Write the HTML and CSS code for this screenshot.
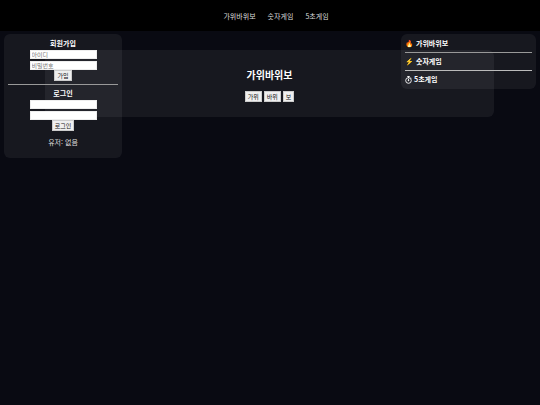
FILE: index.html
```html
<!DOCTYPE html>
<html lang="ko">
<head>
<meta charset="utf-8">
<title>가위바위보</title>
<link rel="stylesheet" href="styles.css">
</head>
<body>
<nav class="topbar">
  <a href="#rps">가위바위보</a>
  <a href="#number">숫자게임</a>
  <a href="#five">5초게임</a>
</nav>
<main class="stage">
  <section class="card game" id="rps">
    <h1>가위바위보</h1>
    <div class="choices">
      <button type="button">가위</button>
      <button type="button">바위</button>
      <button type="button">보</button>
    </div>
  </section>
  <aside class="card account">
    <form class="form">
      <h2>회원가입</h2>
      <input type="text" placeholder="아이디" aria-label="아이디">
      <input type="password" placeholder="비밀번호" aria-label="비밀번호">
      <button type="button">가입</button>
    </form>
    <hr>
    <form class="form">
      <h2>로그인</h2>
      <input type="text" aria-label="로그인 아이디">
      <input type="password" aria-label="로그인 비밀번호">
      <button type="button">로그인</button>
    </form>
    <p class="user">유저: 없음</p>
  </aside>
  <aside class="card ranking">
    <h2>🔥 가위바위보</h2>
    <hr>
    <h2>⚡ 숫자게임</h2>
    <hr class="bright">
    <h2 class="timed">
      <svg class="stopwatch" viewBox="0 0 14 16" fill="none" stroke="currentColor" aria-hidden="true">
        <circle cx="7" cy="9" r="5.6" stroke-width="1.8"/>
        <path d="M4.5 1h5M7 1v3M11.5 3.2l1.5 1.5M7 9V5.5" stroke-width="1.8"/>
        <circle cx="7" cy="9" r="1" fill="currentColor"/>
      </svg>
      5초게임
    </h2>
  </aside>
</main>
</body>
</html>
```
FILE: styles.css
```css
* {
  box-sizing: border-box;
}

body {
  margin: 0;
  min-height: 100vh;
  background: #090a12;
  color: #fff;
  font: 7px/10px "Noto Sans CJK KR", sans-serif;
}

h1,
h2,
p {
  margin: 0;
}

h2 {
  font-size: 7px;
  line-height: 10px;
}

.topbar {
  display: flex;
  justify-content: center;
  gap: 12px;
  padding: 11px 0 10px 12px;
  background: #000;
}

.topbar a {
  color: #ddd;
  text-decoration: none;
}

.stage {
  position: relative;
  padding: 19px 46px 0 45px;
}

.card {
  border-radius: 6px;
  background: rgba(255, 255, 255, 0.06);
}

.game {
  padding: 17px 0 15px;
  text-align: center;
}

.game h1 {
  margin-bottom: 8px;
  font-size: 10px;
  line-height: 16px;
}

.choices {
  display: flex;
  justify-content: center;
  gap: 2px;
}

button {
  height: 11px;
  padding: 0 2px;
  border: 1px solid #ccc;
  background: #efefef;
  color: #111;
  font: 6px/9px "Noto Sans CJK KR", sans-serif;
}

.account,
.ranking {
  position: absolute;
  top: 3px;
  padding: 4px;
}

.account {
  left: 4px;
  width: 118px;
  padding-bottom: 11px;
  text-align: center;
}

.ranking {
  right: 4px;
  width: 135px;
}

.ranking h2 {
  line-height: 11px;
}

.timed {
  display: flex;
  align-items: center;
  gap: 2px;
}

.stopwatch {
  width: 7px;
  height: 8px;
}

.form {
  display: flex;
  flex-direction: column;
  align-items: center;
}

.form h2 {
  margin-bottom: 2px;
}

.form input {
  width: 67px;
  height: 9px;
  margin-bottom: 2px;
  padding: 0 1px;
  border: 1px solid #eee;
  background: #fff;
  color: #111;
  font: 6px/7px "Noto Sans CJK KR", sans-serif;
}

.form input::placeholder {
  color: #777;
}

.form button {
  margin-top: -2px;
}

hr {
  height: 1px;
  margin: 3px 0;
  border: 0;
  background: #999;
}

.bright {
  background: #bbb;
}

.user {
  margin-top: 6px;
  color: #ddd;
}
```
